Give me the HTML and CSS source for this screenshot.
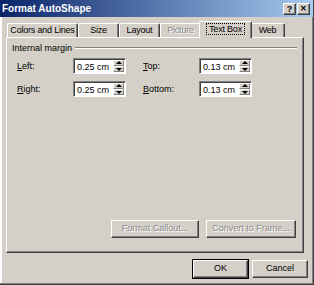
FILE: index.html
```html
<!DOCTYPE html>
<html lang="en">
<head>
    <meta charset="UTF-8">
    <title>Format AutoShape</title>
    <link rel="stylesheet" href="styles.css">
</head>
<body>
    <div class="window">
        <div class="titlebar">
            <span class="title">Format AutoShape</span>
            <div class="caption-btns">
                <span class="cap-btn">?</span>
                <span class="cap-btn close">&#x2715;</span>
            </div>
        </div>

        <div class="content">
            <div class="tabs">
                <span class="tab w-colors">Colors and Lines</span>
                <span class="tab w-size">Size</span>
                <span class="tab w-layout">Layout</span>
                <span class="tab w-picture disabled">Picture</span>
                <span class="tab w-textbox active"><span class="focus">Text Box</span></span>
                <span class="tab w-web">Web</span>
            </div>

            <div class="panel">
                <div class="group-title">
                    <span>Internal margin</span>
                    <div class="rule"></div>
                </div>

                <div class="fields">
                    <label><u>L</u>eft:</label>
                    <div class="spin"><span class="value">0.25 cm</span><div class="arrows"><span class="up"></span><span class="down"></span></div></div>
                    <span></span>
                    <label><u>T</u>op:</label>
                    <div class="spin"><span class="value">0.13 cm</span><div class="arrows"><span class="up"></span><span class="down"></span></div></div>

                    <label><u>R</u>ight:</label>
                    <div class="spin"><span class="value">0.25 cm</span><div class="arrows"><span class="up"></span><span class="down"></span></div></div>
                    <span></span>
                    <label><u>B</u>ottom:</label>
                    <div class="spin"><span class="value">0.13 cm</span><div class="arrows"><span class="up"></span><span class="down"></span></div></div>
                </div>

                <div class="panel-buttons">
                    <span class="btn disabled w-callout">Format Callout...</span>
                    <span class="btn disabled w-frame">Convert to Frame...</span>
                </div>
            </div>

            <div class="dialog-buttons">
                <span class="btn default w-ok">OK</span>
                <span class="btn w-cancel">Cancel</span>
            </div>
        </div>
    </div>
</body>
</html>
```

FILE: styles.css
```css
body{
    margin: 0;
    background-color: #d4d0c8;
    font-family: "Liberation Sans", Arial, sans-serif;
    font-size: 9px;
    color: #000;
    white-space: nowrap;
}

.window{
    width: 314px;
    height: 285px;
    box-sizing: border-box;
    background-color: #d4d0c8;
    border-right: 1px solid #404040;
    border-bottom: 1px solid #404040;
    box-shadow: inset -1px -1px #808080, inset 2px 0 #fff;
    display: flex;
    flex-direction: column;
}

.titlebar{
    height: 17px;
    background: linear-gradient(to right, #0a246a, #a6caf0);
    display: flex;
    align-items: center;
    justify-content: space-between;
    padding: 0 3px 0 2px;
}

.title{
    color: #fff;
    font-weight: bold;
    font-size: 10px;
}

.caption-btns{
    display: flex;
    gap: 1px;
}

.cap-btn{
    width: 11px;
    height: 10px;
    background-color: #d4d0c8;
    border: 1px solid;
    border-color: #fff #404040 #404040 #fff;
    box-shadow: inset -1px -1px #808080;
    font-size: 9px;
    font-weight: bold;
    line-height: 10px;
    text-align: center;
}

.cap-btn.close{
    font-size: 8px;
}

.content{
    flex: 1;
    display: flex;
    flex-direction: column;
    padding: 5px 9px 0 6px;
}

/* tabs */
.tabs{
    display: flex;
    height: 15px;
    padding-left: 1px;
    align-items: flex-end;
}

.tab{
    height: 14px;
    box-sizing: border-box;
    border-top: 1px solid #fff;
    border-left: 1px solid #fff;
    border-right: 1px solid #404040;
    box-shadow: inset -1px 0 #808080;
    border-radius: 2px 2px 0 0;
    text-align: center;
    line-height: 13px;
    letter-spacing: -0.2px;
}

.tab.active{
    height: 17px;
    margin: 0 -2px -1px;
    position: relative;
    z-index: 1;
    background-color: #d4d0c8;
    padding-top: 1px;
}

.focus{
    outline: 1px dotted #000;
    padding: 0 2px;
}

.disabled{
    color: #8a8a8a;
    text-shadow: 1px 1px #fff;
}

.w-colors{ width: 71px; }
.w-size{ width: 41px; }
.w-layout{ width: 41px; }
.w-picture{ width: 41px; }
.w-textbox{ width: 53px; }
.w-web{ width: 35px; }

.panel{
    height: 216px;
    box-sizing: border-box;
    border-top: 1px solid #fff;
    border-left: 1px solid #fff;
    border-right: 1px solid #404040;
    border-bottom: 1px solid #404040;
    box-shadow: inset -1px -1px #808080;
    display: flex;
    flex-direction: column;
    padding: 5px 6px 14px 5px;
}

.group-title{
    display: flex;
    align-items: center;
    gap: 3px;
}

.rule{
    flex: 1;
    border-top: 1px solid #808080;
    border-bottom: 1px solid #fff;
    height: 0;
}

.fields{
    display: grid;
    grid-template-columns: 56px 53px 17px 56px 53px;
    row-gap: 7px;
    align-items: center;
    margin: 5px 0 0 5px;
}

.spin{
    height: 16px;
    box-sizing: border-box;
    background-color: #fff;
    border: 1px solid;
    border-color: #808080 #fff #fff #808080;
    box-shadow: inset 1px 1px #404040;
    display: flex;
    align-items: center;
    justify-content: space-between;
    padding: 1px 1px 0 3px;
}

.arrows{
    display: flex;
    flex-direction: column;
    align-self: stretch;
    width: 11px;
    margin-bottom: 1px;
}

.arrows span{
    flex: 1;
    background-color: #d4d0c8;
    border: 1px solid;
    border-color: #fff #808080 #808080 #fff;
    position: relative;
}

.arrows .up::after,
.arrows .down::after{
    content: "";
    position: absolute;
    left: 2px;
    top: 1px;
    border-left: 3px solid transparent;
    border-right: 3px solid transparent;
}

.arrows .up::after{
    border-bottom: 3px solid #000;
    top: 0;
}

.arrows .down::after{
    border-top: 3px solid #000;
}

.panel-buttons{
    margin-top: auto;
    display: flex;
    justify-content: flex-end;
    gap: 7px;
    padding-right: 1px;
}

.btn{
    height: 18px;
    box-sizing: border-box;
    border: 1px solid;
    border-color: #fff #404040 #404040 #fff;
    box-shadow: inset -1px -1px #808080;
    text-align: center;
    line-height: 15px;
}

.btn.default{
    outline: 1px solid #000;
    outline-offset: 0;
}

.w-callout{ width: 88px; }
.w-frame{ width: 90px; }
.w-ok{ width: 55px; }
.w-cancel{ width: 56px; }

.dialog-buttons{
    display: flex;
    justify-content: flex-end;
    gap: 4px;
    margin: 7px -4px 0 0;
}
```
